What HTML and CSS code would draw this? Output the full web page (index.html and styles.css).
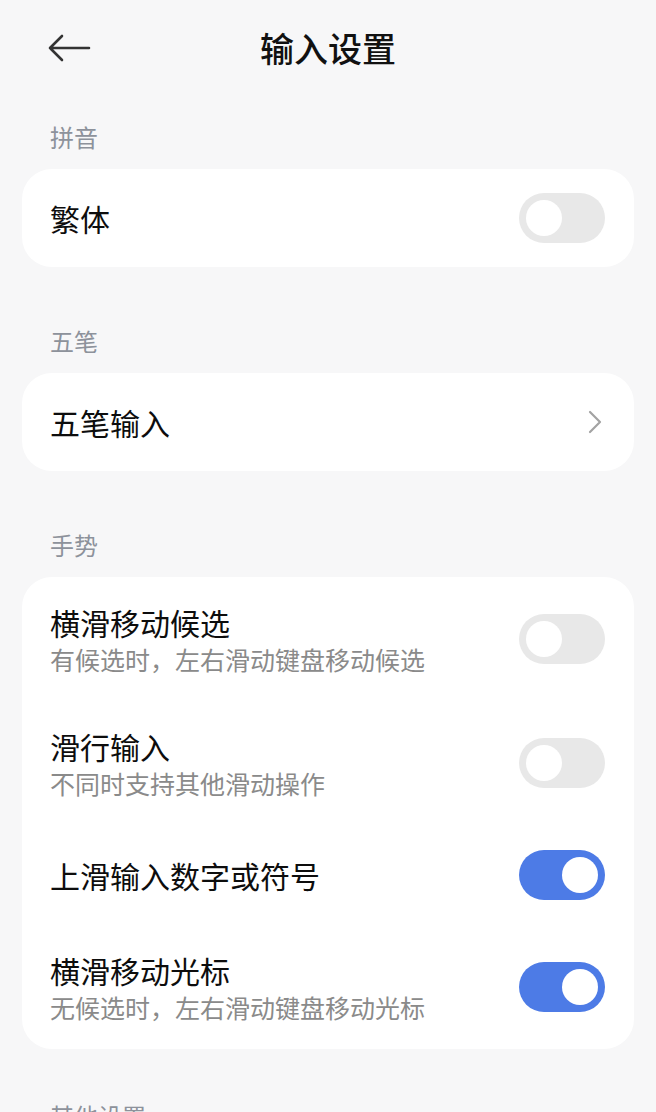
FILE: index.html
```html
<!DOCTYPE html>
<html lang="zh-CN">

<head>
    <meta charset="UTF-8">
    <meta name="viewport" content="width=device-width, initial-scale=1.0">
    <title>输入设置</title>
    <link rel="stylesheet" href="styles.css">
</head>

<body>
    <div class="topbar">
        <button class="back" aria-label="返回">
            <svg width="44" height="30" viewBox="0 0 44 30">
                <path d="M15 3 L3 15 L15 27 M3 15 H42" fill="none" stroke="#333" stroke-width="2.6"
                    stroke-linecap="round" stroke-linejoin="round" />
            </svg>
        </button>
        <h1 class="title">输入设置</h1>
    </div>

    <div class="page">
        <div class="group-label first">拼音</div>
        <div class="card">
            <div class="row">
                <div class="row-text">
                    <div class="row-title">繁体</div>
                </div>
                <span class="switch"></span>
            </div>
        </div>

        <div class="group-label">五笔</div>
        <div class="card">
            <div class="row">
                <div class="row-text">
                    <div class="row-title">五笔输入</div>
                </div>
                <svg class="chevron" width="16" height="26" viewBox="0 0 16 26">
                    <path d="M3 3 L13 13 L3 23" fill="none" stroke="#a3a3a3" stroke-width="2.2"
                        stroke-linecap="round" stroke-linejoin="round" />
                </svg>
            </div>
        </div>

        <div class="group-label">手势</div>
        <div class="card">
            <div class="row tall">
                <div class="row-text">
                    <div class="row-title">横滑移动候选</div>
                    <div class="row-sub">有候选时，左右滑动键盘移动候选</div>
                </div>
                <span class="switch"></span>
            </div>
            <div class="row tall">
                <div class="row-text">
                    <div class="row-title">滑行输入</div>
                    <div class="row-sub">不同时支持其他滑动操作</div>
                </div>
                <span class="switch"></span>
            </div>
            <div class="row mid">
                <div class="row-text">
                    <div class="row-title">上滑输入数字或符号</div>
                </div>
                <span class="switch on"></span>
            </div>
            <div class="row tall">
                <div class="row-text">
                    <div class="row-title">横滑移动光标</div>
                    <div class="row-sub">无候选时，左右滑动键盘移动光标</div>
                </div>
                <span class="switch on"></span>
            </div>
        </div>

        <div class="group-label last">其他设置</div>
    </div>
</body>

</html>
```

FILE: styles.css
```css
body {
    margin: 0;
    background-color: #f7f7f8;
    font-family: "Noto Sans CJK SC", "Noto Sans", sans-serif;
    color: #111;
    overflow: hidden;
}

.topbar {
    position: relative;
    height: 96px;
    display: flex;
    align-items: center;
    justify-content: center;
}

.back {
    position: absolute;
    left: 47px;
    top: 33px;
    padding: 0;
    border: none;
    background: none;
    cursor: pointer;
}

.back svg {
    display: block;
}

.title {
    margin: 0;
    font-size: 34px;
    font-weight: 500;
    line-height: 40px;
    color: #111;
}

.page {
    padding: 0 22px;
}

.group-label {
    padding: 58px 28px 16px;
    font-size: 24px;
    line-height: 32px;
    color: #8d929b;
}

.group-label.first {
    padding-top: 25px;
}

.group-label.last {
    padding-top: 51px;
}

.card {
    background-color: #fff;
    border-radius: 30px;
}

.row {
    display: flex;
    align-items: center;
    justify-content: space-between;
    box-sizing: border-box;
    min-height: 98px;
    padding: 24px 28px;
}

.row.mid {
    min-height: 100px;
}

.row.tall {
    padding-top: 25px;
    padding-bottom: 25px;
}

.row-title {
    font-size: 30px;
    font-weight: 400;
    line-height: 40px;
    color: #0d0d0d;
}

.row-sub {
    font-size: 25px;
    line-height: 34px;
    color: #8a8a8a;
}

.switch {
    position: relative;
    flex: none;
    width: 86px;
    height: 50px;
    border-radius: 25px;
    background-color: #e8e8e8;
    margin-right: 1px;
}

.switch::after {
    content: "";
    position: absolute;
    top: 7px;
    left: 7px;
    width: 36px;
    height: 36px;
    border-radius: 50%;
    background-color: #fff;
}

.switch.on {
    background-color: #4d7be6;
}

.switch.on::after {
    left: 43px;
}

.chevron {
    flex: none;
    margin-right: 3px;
}
```
